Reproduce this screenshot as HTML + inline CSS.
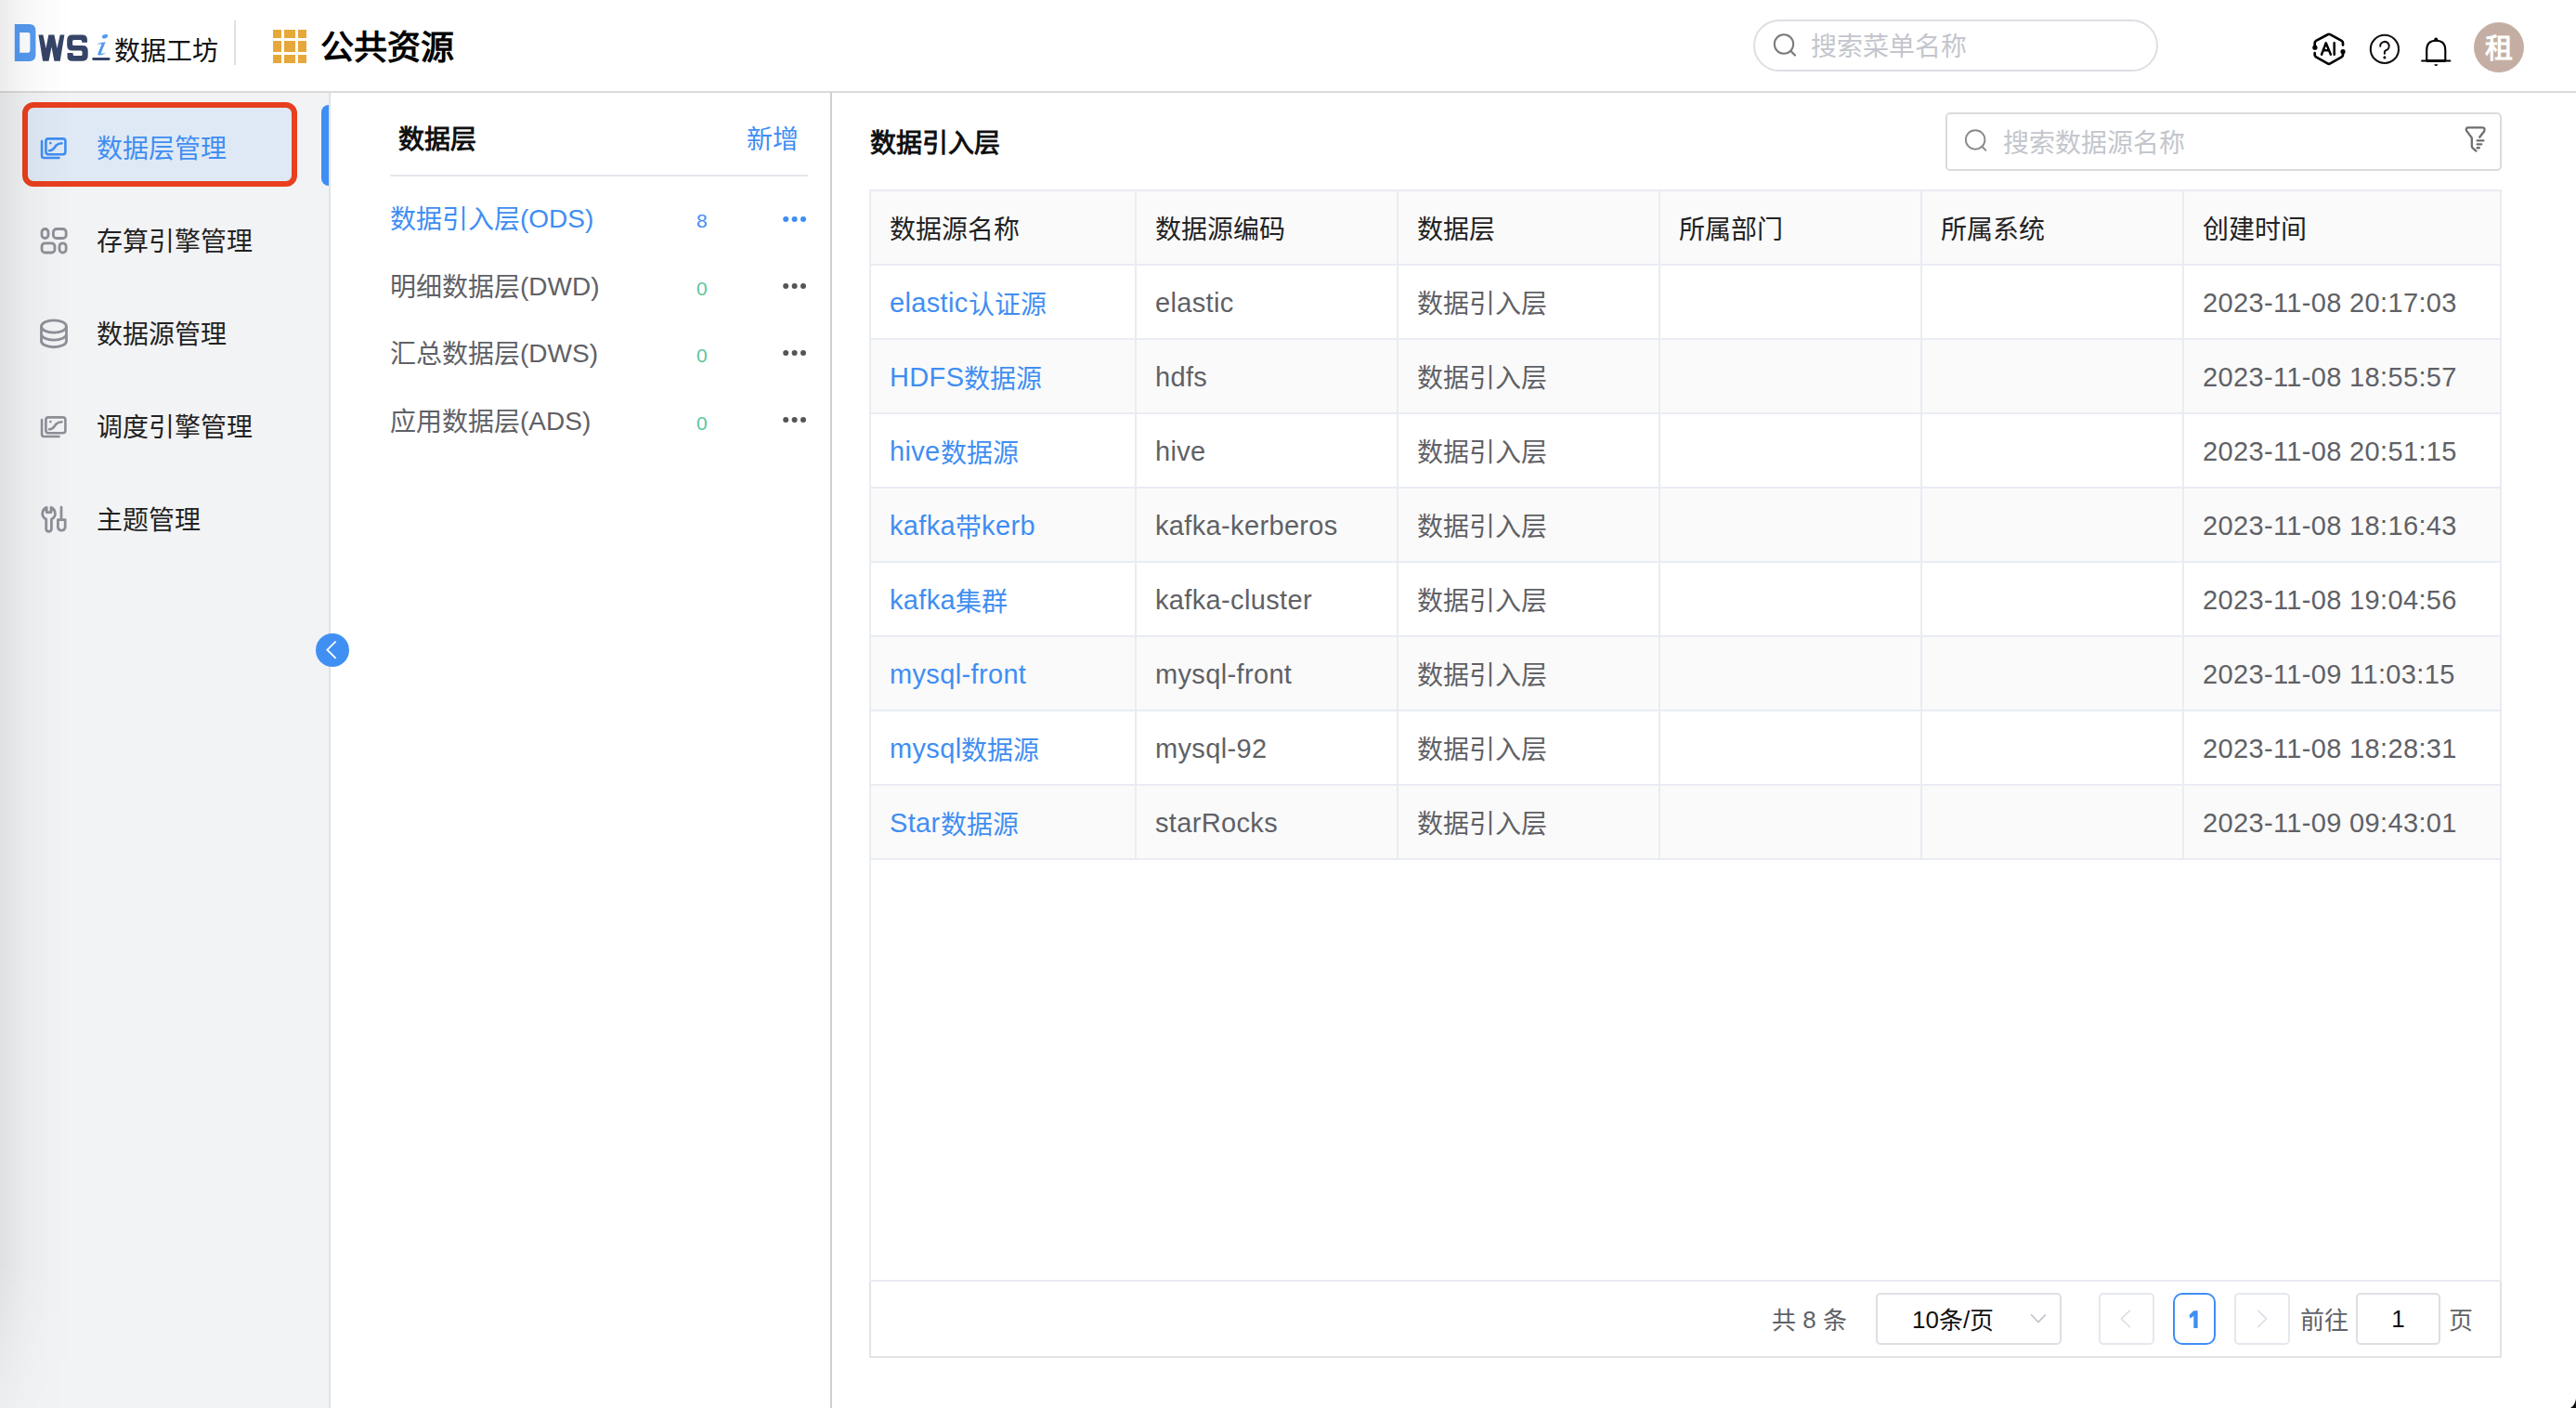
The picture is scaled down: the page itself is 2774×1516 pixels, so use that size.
<!DOCTYPE html>
<html lang="zh-CN">
<head>
<meta charset="utf-8">
<title>公共资源</title>
<style>
*{box-sizing:border-box;margin:0;padding:0}
html,body{width:2774px;height:1516px;overflow:hidden;background:#fff;font-family:"Liberation Sans",sans-serif;color:#222}
.a{position:absolute;white-space:nowrap}
.t28{font-size:28px;line-height:28px}
.t26{font-size:26px;line-height:26px}
.l3{position:relative;top:-1px}
.l2{position:relative;top:-1px}
.l{font-size:29px;letter-spacing:0.35px;position:relative;top:-2px}
/* header */
#hdr{position:absolute;left:0;top:0;width:2774px;height:100px;background:#fff;border-bottom:2px solid #dadada}
#side{position:absolute;left:0;top:100px;width:356px;height:1416px;background:#f2f3f5;border-right:2px solid #e1e2e5}
#mid{position:absolute;left:356px;top:100px;width:540px;height:1416px;background:#fff;border-right:2px solid #cfcfcf}
#shade{position:absolute;left:0;top:0;width:90px;height:1516px;background:linear-gradient(to right,rgba(0,0,0,0.075),rgba(0,0,0,0.028) 30px,rgba(0,0,0,0) 75px);pointer-events:none;-webkit-mask-image:linear-gradient(to bottom,#000 0,#000 1360px,rgba(0,0,0,0.25) 1516px);mask-image:linear-gradient(to bottom,#000 0,#000 1360px,rgba(0,0,0,0.25) 1516px)}
</style>
</head>
<body>
<div id="hdr">
<svg class="a" style="left:0;top:0" width="140" height="80" viewBox="0 0 140 80">
<path fill="#559af0" fill-rule="evenodd" d="M15.8 26H31.6Q38.4 26 38.4 33V59Q38.4 66 31.6 66H15.8ZM21.2 34.9V56.8H30.2Q32.4 56.8 32.4 54.6V37.1Q32.4 34.9 30.2 34.9Z"/>
<path fill="#364467" d="M41.5 37.6H46.4L49.5 51.9L52.3 37.6H58.4L61.5 51.9L64.7 37.6H69.4L64.7 65.7H58.4L55.5 50.4L52.5 65.7H46.1Z"/>
<path fill="#364467" d="M94 45.8H88.2V44.5Q88.2 43 86.6 43H79.6Q78.1 43 78.1 44.6V47.6Q78.1 49.1 79.6 49.1H89Q94.7 49.1 94.7 54.8V60Q94.7 65.7 89 65.7H77.8Q72.5 65.7 72.5 61V57.1H78.6V58.6Q78.6 60.1 80.1 60.1H87.1Q88.6 60.1 88.6 58.6V56Q88.6 54.5 87.1 54.5H77.8Q72.2 54.5 72.2 49V43.2Q72.2 37.6 77.8 37.6H88.5Q94 37.6 94 43Z"/>
<ellipse cx="113" cy="39.2" rx="3.2" ry="2.2" transform="rotate(-20 113 39.2)" fill="#559af0"/>
<path fill="#559af0" d="M104.3 47.6Q108 45.4 113.6 45.2L108.6 57.8Q111 57.6 114.6 56.4Q111 59.4 106.8 59.6Q104.8 59.6 105.3 58L109.6 47.2Q106.8 47.4 104.3 47.6Z"/>
<path stroke="#364467" stroke-width="2.8" stroke-linecap="round" d="M100.6 63.5H117.2"/>
</svg>
<div class="a t28" style="left:123px;top:42px;color:#111">数据工坊</div>
<div class="a" style="left:252px;top:22px;width:2px;height:48px;background:#dde1e8"></div>
<svg class="a" style="left:294px;top:32px" width="36" height="36" viewBox="0 0 36 36" fill="#e6a83a">
<rect x="0" y="0" width="9" height="9"/><rect x="12" y="0" width="12" height="9"/><rect x="27" y="0" width="9" height="9"/>
<rect x="0" y="12" width="9" height="12"/><rect x="12" y="12" width="12" height="12"/><rect x="27" y="12" width="9" height="12"/>
<rect x="0" y="27" width="9" height="9"/><rect x="12" y="27" width="12" height="9"/><rect x="27" y="27" width="9" height="9"/>
</svg>
<div class="a" style="left:345px;top:34px;font-size:36px;line-height:36px;font-weight:bold;color:#000">公共资源</div>
<div class="a" style="left:1888px;top:21px;width:436px;height:56px;border:2px solid #dcdfe3;border-radius:28px;background:#fff"></div>
<svg class="a" style="left:1905px;top:32px" width="34" height="32" viewBox="0 0 34 32">
<circle cx="16" cy="15.5" r="10.2" fill="none" stroke="#7a7a7a" stroke-width="2"/><path d="M23.5 23L28 27.5" stroke="#7a7a7a" stroke-width="2.2" stroke-linecap="round"/>
</svg>
<div class="a t28" style="left:1950px;top:37px;color:#c3c6cd">搜索菜单名称</div>
<svg class="a" style="left:2486px;top:30px" width="44" height="44" viewBox="0 0 44 44" fill="none" stroke="#000" stroke-width="2.7" stroke-linecap="round" stroke-linejoin="round">
<path d="M6.7 18.4V16.3Q6.7 14.7 8.1 13.9L20.5 7.2Q21.9 6.4 23.3 7.2L35.6 13.9Q37 14.7 37 16.3V18.4"/>
<path d="M6.7 27.2V28.9Q6.7 30.5 8.1 31.3L20.5 38.4Q21.9 39.2 23.3 38.4L35.6 31.3Q37 30.5 37 28.9V25.5"/>
<circle cx="6.9" cy="21.2" r="2.6" fill="#000" stroke="none"/><circle cx="37" cy="25.5" r="2.6" fill="#000" stroke="none"/>
<path d="M14 28.7L18.75 16.3L23.9 28.7M16.2 24.3H21.6M27.7 16.3V28.7" stroke-width="2.5"/>
</svg>
<svg class="a" style="left:2546px;top:30px" width="100" height="44" viewBox="0 0 100 44" fill="none" stroke="#140f0f" stroke-linecap="round">
<circle cx="21.9" cy="22.9" r="15.1" stroke-width="2.1"/>
<path d="M17.2 19.8A4.75 4.75 0 1 1 23.6 24.1Q21.9 24.6 21.9 26.2V27.8" stroke-width="2.1"/>
<circle cx="21.9" cy="31.9" r="1.55" fill="#140f0f" stroke="none"/>
<path d="M67.2 35.3V24Q67.2 13.8 77.25 13.8Q87.3 13.8 87.3 24V35.3" stroke="#000" stroke-width="2.1"/>
<path d="M62.2 35.5H92.3" stroke="#000" stroke-width="2.2"/>
<path d="M67 35.5H87.5" stroke="#000" stroke-width="2.8" stroke-linecap="butt"/>
<path d="M74.9 14.2Q75.1 10.4 77.25 10.4Q79.4 10.4 79.6 14.2Z" fill="#000" stroke="none"/>
<path d="M75.2 39.2H79.3Q78.6 41.1 77.25 41.1Q75.9 41.1 75.2 39.2Z" fill="#000" stroke="none"/>
</svg>
<div class="a" style="left:2664px;top:24px;width:54px;height:54px;border-radius:50%;background:#c4aea3"></div>
<div class="a" style="left:2676px;top:37px;font-size:30px;line-height:30px;font-weight:bold;color:#fff">租</div>
</div>

<div id="side">
<div class="a" style="left:24px;top:10px;width:296px;height:91px;border:6px solid #e8401f;border-radius:12px;background:#dfe9f5"></div>
<div class="a" style="left:346px;top:13px;width:8px;height:87px;background:#3d8ef5;border-radius:8px 0 0 8px"></div>
<svg class="a" style="left:36px;top:36px" width="44" height="44" viewBox="0 0 44 44"><g fill="none" stroke="#3f8ef2" stroke-width="2.6" stroke-linecap="round" stroke-linejoin="round"><rect x="13.4" y="13.4" width="21" height="16.8" rx="2.6"/><path d="M9.06 16.1V31.5Q9.06 34.06 11.6 34.06H27.5"/><path d="M17 26.25C22 26.25 23 22 24.5 20.5C26 19 27.5 18.3 30.5 18.3"/><circle cx="18.3" cy="18.1" r="1.35" fill="#3f8ef2" stroke="none"/></g></svg>
<div class="a t28" style="left:104px;top:47px;color:#3f8ef2">数据层管理</div>
<svg class="a" style="left:36px;top:136px" width="44" height="44" viewBox="0 0 44 44" fill="none" stroke="#8d9097" stroke-width="2.8"><rect x="9" y="10.5" width="7" height="10" rx="3.5"/><rect x="21.4" y="10.5" width="13.8" height="10" rx="3.6"/><rect x="9" y="25.8" width="14" height="10.2" rx="3.6"/><rect x="28" y="25.8" width="7.2" height="10.2" rx="3.6"/></svg>
<div class="a t28" style="left:104px;top:147px">存算引擎管理</div>
<svg class="a" style="left:36px;top:236px" width="44" height="44" viewBox="0 0 44 44" fill="none" stroke="#8d9097" stroke-width="2.8"><ellipse cx="22" cy="15.5" rx="13.5" ry="6.6"/><path d="M8.5 15.5V31.25M35.5 15.5V31.25M8.5 23.75A13.5 6.4 0 0 0 35.5 23.75M8.5 31.25A13.5 6.5 0 0 0 35.5 31.25"/></svg>
<div class="a t28" style="left:104px;top:247px">数据源管理</div>
<svg class="a" style="left:36px;top:336px" width="44" height="44" viewBox="0 0 44 44"><g fill="none" stroke="#8d9097" stroke-width="2.6" stroke-linecap="round" stroke-linejoin="round"><rect x="13.4" y="13.4" width="21" height="16.8" rx="2.6"/><path d="M9.06 16.1V31.5Q9.06 34.06 11.6 34.06H27.5"/><path d="M17 26.25C22 26.25 23 22 24.5 20.5C26 19 27.5 18.3 30.5 18.3"/><circle cx="18.3" cy="18.1" r="1.35" fill="#8d9097" stroke="none"/></g></svg>
<div class="a t28" style="left:104px;top:347px">调度引擎管理</div>
<svg class="a" style="left:36px;top:436px" width="44" height="44" viewBox="0 0 44 44" fill="none" stroke="#8d9097" stroke-width="2.8" stroke-linecap="round" stroke-linejoin="round"><path d="M14.2 10.4V15.6H19V10.4C21.8 11.6 23.4 14.2 23.4 17.2C23.4 19.6 22.2 21.6 19.4 23V33.4A2.85 2.85 0 0 1 13.7 33.4V23C10.9 21.6 9.7 19.6 9.7 17.2C9.7 14.2 11.4 11.6 14.2 10.4Z"/><path d="M30 10.2V23.6M26.4 23.6H34.2V32A4 4 0 0 1 26.4 32Z"/></svg>
<div class="a t28" style="left:104px;top:447px">主题管理</div>
</div>
<div class="a" style="z-index:5;left:340px;top:682px;width:36px;height:36px;border-radius:50%;background:#4090f3"></div>
<svg class="a" style="z-index:6;left:340px;top:682px" width="36" height="36" viewBox="0 0 36 36" fill="none" stroke="#fff" stroke-width="1.8" stroke-linecap="square"><path d="M21 9.2L12.4 17.7L21 26.2"/></svg>

<div id="mid">
<div class="a t28" style="left:73px;top:37px;font-weight:bold;color:#111">数据层</div>
<div class="a t28" style="left:448px;top:37px;color:#3f8ef2">新增</div>
<div class="a" style="left:64px;top:88px;width:450px;height:2px;background:#e6e8ee"></div>
<div class="a t28" style="left:64px;top:123px;color:#3f8ef2">数据引入层<span class="l2">(ODS)</span></div>
<div class="a" style="left:394px;top:127px;font-size:21px;line-height:21px;color:#3f8ef2">8</div>
<div class="a" style="left:487px;top:130.7px;height:10px"><svg style="display:block" width="28" height="10" viewBox="0 0 28 10" fill="#3f8ef2"><circle cx="3.2" cy="5" r="3"/><circle cx="12.6" cy="5" r="3"/><circle cx="22" cy="5" r="3"/></svg></div>
<div class="a t28" style="left:64px;top:196px;color:#5f6166">明细数据层<span class="l2">(DWD)</span></div>
<div class="a" style="left:394px;top:200px;font-size:21px;line-height:21px;color:#5cc69c">0</div>
<div class="a" style="left:487px;top:203.2px;height:10px"><svg style="display:block" width="28" height="10" viewBox="0 0 28 10" fill="#555"><circle cx="3.2" cy="5" r="3"/><circle cx="12.6" cy="5" r="3"/><circle cx="22" cy="5" r="3"/></svg></div>
<div class="a t28" style="left:64px;top:268px;color:#5f6166">汇总数据层<span class="l2">(DWS)</span></div>
<div class="a" style="left:394px;top:272px;font-size:21px;line-height:21px;color:#5cc69c">0</div>
<div class="a" style="left:487px;top:275.3px;height:10px"><svg style="display:block" width="28" height="10" viewBox="0 0 28 10" fill="#555"><circle cx="3.2" cy="5" r="3"/><circle cx="12.6" cy="5" r="3"/><circle cx="22" cy="5" r="3"/></svg></div>
<div class="a t28" style="left:64px;top:341px;color:#5f6166">应用数据层<span class="l2">(ADS)</span></div>
<div class="a" style="left:394px;top:345px;font-size:21px;line-height:21px;color:#5cc69c">0</div>
<div class="a" style="left:487px;top:347.2px;height:10px"><svg style="display:block" width="28" height="10" viewBox="0 0 28 10" fill="#555"><circle cx="3.2" cy="5" r="3"/><circle cx="12.6" cy="5" r="3"/><circle cx="22" cy="5" r="3"/></svg></div>
</div>

<div id="right">
<div class="a t28" style="left:937px;top:141px;font-weight:bold;color:#111">数据引入层</div>
<div class="a" style="left:2095px;top:121px;width:599px;height:63px;border:2px solid #d9dbde;border-radius:5px;background:#fff"></div>
<svg class="a" style="left:2105px;top:128px" width="45" height="45" viewBox="0 0 45 45" fill="none" stroke="#8a8a8a" stroke-width="1.9" stroke-linecap="round"><circle cx="22.15" cy="22.45" r="10.25"/><path d="M29.6 30L33.4 33.8"/></svg>
<div class="a t28" style="left:2157px;top:141px;color:#c3c6cd">搜索数据源名称</div>
<svg class="a" style="left:2640px;top:125px" width="60" height="50" viewBox="0 0 60 50" fill="none" stroke="#6e6e6e" stroke-width="2.3" stroke-linecap="round" stroke-linejoin="round"><path d="M30.2 22.7L35.2 16.2Q36.4 12.4 33.4 12.4H18.2Q15 12.4 16 15.6L21.8 23.4V32.6Q21.8 33.6 22.8 34.4L26.4 37.6"/><path d="M27.6 26.4H34.4M27.6 30.35H32.2M27.6 34.25H29.8"/></svg>
<div class="a" style="left:936px;top:204px;width:1758px;height:1176px;border:2px solid #e9ecf3;background:#fff"></div>
<div class="a" style="left:938px;top:206px;width:1754px;height:78px;background:#fafafa"></div>
<div class="a" style="left:938px;top:366px;width:1754px;height:78px;background:#fafafa"></div>
<div class="a" style="left:938px;top:526px;width:1754px;height:78px;background:#fafafa"></div>
<div class="a" style="left:938px;top:686px;width:1754px;height:78px;background:#fafafa"></div>
<div class="a" style="left:938px;top:846px;width:1754px;height:78px;background:#fafafa"></div>
<div class="a" style="left:938px;top:284px;width:1754px;height:2px;background:#e9ecf3"></div>
<div class="a" style="left:938px;top:364px;width:1754px;height:2px;background:#e9ecf3"></div>
<div class="a" style="left:938px;top:444px;width:1754px;height:2px;background:#e9ecf3"></div>
<div class="a" style="left:938px;top:524px;width:1754px;height:2px;background:#e9ecf3"></div>
<div class="a" style="left:938px;top:604px;width:1754px;height:2px;background:#e9ecf3"></div>
<div class="a" style="left:938px;top:684px;width:1754px;height:2px;background:#e9ecf3"></div>
<div class="a" style="left:938px;top:764px;width:1754px;height:2px;background:#e9ecf3"></div>
<div class="a" style="left:938px;top:844px;width:1754px;height:2px;background:#e9ecf3"></div>
<div class="a" style="left:938px;top:924px;width:1754px;height:2px;background:#e9ecf3"></div>
<div class="a" style="left:1222px;top:206px;width:2px;height:720px;background:#e9ecf3"></div>
<div class="a" style="left:1504px;top:206px;width:2px;height:720px;background:#e9ecf3"></div>
<div class="a" style="left:1786px;top:206px;width:2px;height:720px;background:#e9ecf3"></div>
<div class="a" style="left:2068px;top:206px;width:2px;height:720px;background:#e9ecf3"></div>
<div class="a" style="left:2350px;top:206px;width:2px;height:720px;background:#e9ecf3"></div>
<div class="a t28" style="left:958px;top:234px;color:#222">数据源名称</div>
<div class="a t28" style="left:1244px;top:234px;color:#222">数据源编码</div>
<div class="a t28" style="left:1526px;top:234px;color:#222">数据层</div>
<div class="a t28" style="left:1808px;top:234px;color:#222">所属部门</div>
<div class="a t28" style="left:2090px;top:234px;color:#222">所属系统</div>
<div class="a t28" style="left:2372px;top:234px;color:#222">创建时间</div>
<div class="a t28" style="left:958px;top:314px;color:#3f8ef2"><span class="l">elastic</span>认证源</div>
<div class="a t28 lt" style="left:1244px;top:314px;color:#5f6166"><span class="l">elastic</span></div>
<div class="a t28" style="left:1526px;top:314px;color:#5f6166">数据引入层</div>
<div class="a t28 lt" style="left:2372px;top:314px;color:#5f6166"><span class="l">2023-11-08 20:17:03</span></div>
<div class="a t28" style="left:958px;top:394px;color:#3f8ef2"><span class="l">HDFS</span>数据源</div>
<div class="a t28 lt" style="left:1244px;top:394px;color:#5f6166"><span class="l">hdfs</span></div>
<div class="a t28" style="left:1526px;top:394px;color:#5f6166">数据引入层</div>
<div class="a t28 lt" style="left:2372px;top:394px;color:#5f6166"><span class="l">2023-11-08 18:55:57</span></div>
<div class="a t28" style="left:958px;top:474px;color:#3f8ef2"><span class="l">hive</span>数据源</div>
<div class="a t28 lt" style="left:1244px;top:474px;color:#5f6166"><span class="l">hive</span></div>
<div class="a t28" style="left:1526px;top:474px;color:#5f6166">数据引入层</div>
<div class="a t28 lt" style="left:2372px;top:474px;color:#5f6166"><span class="l">2023-11-08 20:51:15</span></div>
<div class="a t28" style="left:958px;top:554px;color:#3f8ef2"><span class="l">kafka</span>带<span class="l">kerb</span></div>
<div class="a t28 lt" style="left:1244px;top:554px;color:#5f6166"><span class="l">kafka-kerberos</span></div>
<div class="a t28" style="left:1526px;top:554px;color:#5f6166">数据引入层</div>
<div class="a t28 lt" style="left:2372px;top:554px;color:#5f6166"><span class="l">2023-11-08 18:16:43</span></div>
<div class="a t28" style="left:958px;top:634px;color:#3f8ef2"><span class="l">kafka</span>集群</div>
<div class="a t28 lt" style="left:1244px;top:634px;color:#5f6166"><span class="l">kafka-cluster</span></div>
<div class="a t28" style="left:1526px;top:634px;color:#5f6166">数据引入层</div>
<div class="a t28 lt" style="left:2372px;top:634px;color:#5f6166"><span class="l">2023-11-08 19:04:56</span></div>
<div class="a t28" style="left:958px;top:714px;color:#3f8ef2"><span class="l">mysql-front</span></div>
<div class="a t28 lt" style="left:1244px;top:714px;color:#5f6166"><span class="l">mysql-front</span></div>
<div class="a t28" style="left:1526px;top:714px;color:#5f6166">数据引入层</div>
<div class="a t28 lt" style="left:2372px;top:714px;color:#5f6166"><span class="l">2023-11-09 11:03:15</span></div>
<div class="a t28" style="left:958px;top:794px;color:#3f8ef2"><span class="l">mysql</span>数据源</div>
<div class="a t28 lt" style="left:1244px;top:794px;color:#5f6166"><span class="l">mysql-92</span></div>
<div class="a t28" style="left:1526px;top:794px;color:#5f6166">数据引入层</div>
<div class="a t28 lt" style="left:2372px;top:794px;color:#5f6166"><span class="l">2023-11-08 18:28:31</span></div>
<div class="a t28" style="left:958px;top:874px;color:#3f8ef2"><span class="l">Star</span>数据源</div>
<div class="a t28 lt" style="left:1244px;top:874px;color:#5f6166"><span class="l">starRocks</span></div>
<div class="a t28" style="left:1526px;top:874px;color:#5f6166">数据引入层</div>
<div class="a t28 lt" style="left:2372px;top:874px;color:#5f6166"><span class="l">2023-11-09 09:43:01</span></div>
<div class="a" style="left:936px;top:1380px;width:1758px;height:82px;border:2px solid #e2e3e6;border-top:none;background:#fff"></div>
<div class="a t26" style="left:1908px;top:1409px;color:#5f6166">共<span class="l3"> 8 </span>条</div>
<div class="a" style="left:2020px;top:1392px;width:200px;height:56px;border:2px solid #dcdfe4;border-radius:5px"></div>
<div class="a t26" style="left:2059px;top:1409px;color:#111"><span class="l3">10</span>条<span class="l3">/</span>页</div>
<svg class="a" style="left:2180px;top:1408px" width="30" height="24" viewBox="0 0 30 24" fill="none" stroke="#c0c4cc" stroke-width="1.6"><path d="M7.2 7.4L15 15.6L22.9 7.4"/></svg>
<div class="a" style="left:2260px;top:1392px;width:60px;height:56px;border:2px solid #e4e7ed;border-radius:5px"></div>
<svg class="a" style="left:2260px;top:1392px" width="60" height="56" viewBox="0 0 60 56" fill="none" stroke="#dcdfe6" stroke-width="1.7" stroke-linecap="round"><path d="M33.3 19.3L24.4 27.8L33.3 36.75"/></svg>
<div class="a" style="left:2340px;top:1392px;width:46px;height:56px;border:2px solid #3f8ef2;border-radius:10px"></div>
<svg class="a" style="left:2340px;top:1392px" width="46" height="56" viewBox="2340 1392 46 56"><path fill="#3f8ef2" d="M2362.3 1411.3H2366.6V1430H2362.3V1417L2358.4 1419.6L2357.5 1416.1Z"/></svg>
<div class="a" style="left:2406px;top:1392px;width:60px;height:56px;border:2px solid #e4e7ed;border-radius:5px"></div>
<svg class="a" style="left:2406px;top:1392px" width="60" height="56" viewBox="0 0 60 56" fill="none" stroke="#dcdfe6" stroke-width="1.7" stroke-linecap="round"><path d="M25.7 19.3L34.6 27.8L25.7 36.75"/></svg>
<div class="a t26" style="left:2477px;top:1409px;color:#5f6166">前往</div>
<div class="a" style="left:2537px;top:1392px;width:91px;height:56px;border:2px solid #dcdfe4;border-radius:5px"></div>
<div class="a" style="left:2537px;top:1407px;width:91px;text-align:center;font-size:26px;line-height:26px;color:#111">1</div>
<div class="a t26" style="left:2637px;top:1409px;color:#5f6166">页</div>
</div>
<div id="shade"></div>
<svg class="a" style="left:2758px;top:1500px" width="16" height="16" viewBox="0 0 16 16"><path d="M16 6Q15 13 10 16H16Z" fill="#111"/></svg>
</body>
</html>
